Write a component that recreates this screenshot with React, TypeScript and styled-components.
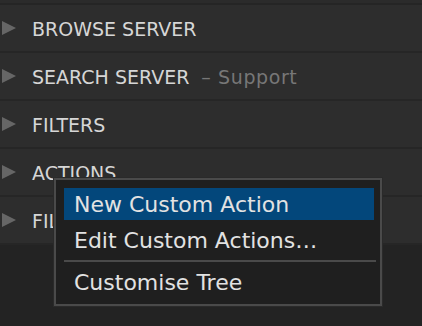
import styled, { createGlobalStyle } from "styled-components";

const GlobalStyle = createGlobalStyle`
  html, body {
    margin: 0;
    padding: 0;
    background: #232323;
  }
  body {
    font-family: "DejaVu Sans", "Open Sans", sans-serif;
  }
`;

interface TreeItem {
  label: string;
  note?: string;
}

const treeItems: TreeItem[] = [
  { label: "BROWSE SERVER" },
  { label: "SEARCH SERVER", note: "Support" },
  { label: "FILTERS" },
  { label: "ACTIONS" },
  { label: "FILES" },
];

const Caret = () => (
  <svg width="14" height="14" viewBox="0 0 14 14">
    <path d="M0 0 L14 7 L0 14 Z" fill="#666666" />
  </svg>
);

const App = () => {
  return (
    <>
      <GlobalStyle />
      <StyledPage>
        <StyledTopStrip />
        {treeItems.map((item) => (
          <StyledRow key={item.label}>
            <Caret />
            <StyledLabel>
              {item.label}
              {item.note && <StyledNote>–&nbsp;{item.note}</StyledNote>}
            </StyledLabel>
          </StyledRow>
        ))}

        <StyledMenu>
          <StyledMenuItem $active>New Custom Action</StyledMenuItem>
          <StyledMenuItem>Edit Custom Actions…</StyledMenuItem>
          <StyledSeparator />
          <StyledMenuItem>Customise Tree</StyledMenuItem>
        </StyledMenu>
      </StyledPage>
    </>
  );
};

export default App;

// ========== Start styled-components =========
const StyledPage = styled.div`
  position: relative;
  width: 422px;
  height: 326px;
  overflow: hidden;
  background: #232323;
`;
const StyledTopStrip = styled.div`
  height: 3px;
  background: #2b2b2b;
  border-bottom: 2px solid #252525;
`;
const StyledRow = styled.div`
  display: flex;
  align-items: center;
  gap: 16px;
  height: 46px;
  padding-left: 2px;
  background: #2d2d2d;
  border-bottom: 2px solid #262626;
`;
const StyledLabel = styled.span`
  color: #d6d6d6;
  font-size: 19px;
  white-space: nowrap;
  padding-top: 2px;
`;
const StyledNote = styled.span`
  margin-left: 12px;
  color: #777777;
  letter-spacing: 0.6px;
`;
const StyledMenu = styled.div`
  position: absolute;
  left: 54px;
  top: 178px;
  width: 328px;
  box-sizing: border-box;
  display: flex;
  flex-direction: column;
  gap: 4px;
  padding: 8px 6px 6px 8px;
  background: #1f1f1f;
  border: 2px solid #4a4a4a;
  box-shadow: 0 0 0 1px #2a2a2a;
`;
const StyledMenuItem = styled.div<{ $active?: boolean }>`
  display: flex;
  align-items: center;
  height: 32px;
  padding-left: 10px;
  font-size: 22px;
  color: #e2e2e2;
  background: ${({ $active }) => ($active ? "#03477b" : "transparent")};
  white-space: nowrap;
`;
const StyledSeparator = styled.div`
  height: 2px;
  margin-right: -2px;
  background: #4a4a4a;
`;
// ========== End styled-components =========
